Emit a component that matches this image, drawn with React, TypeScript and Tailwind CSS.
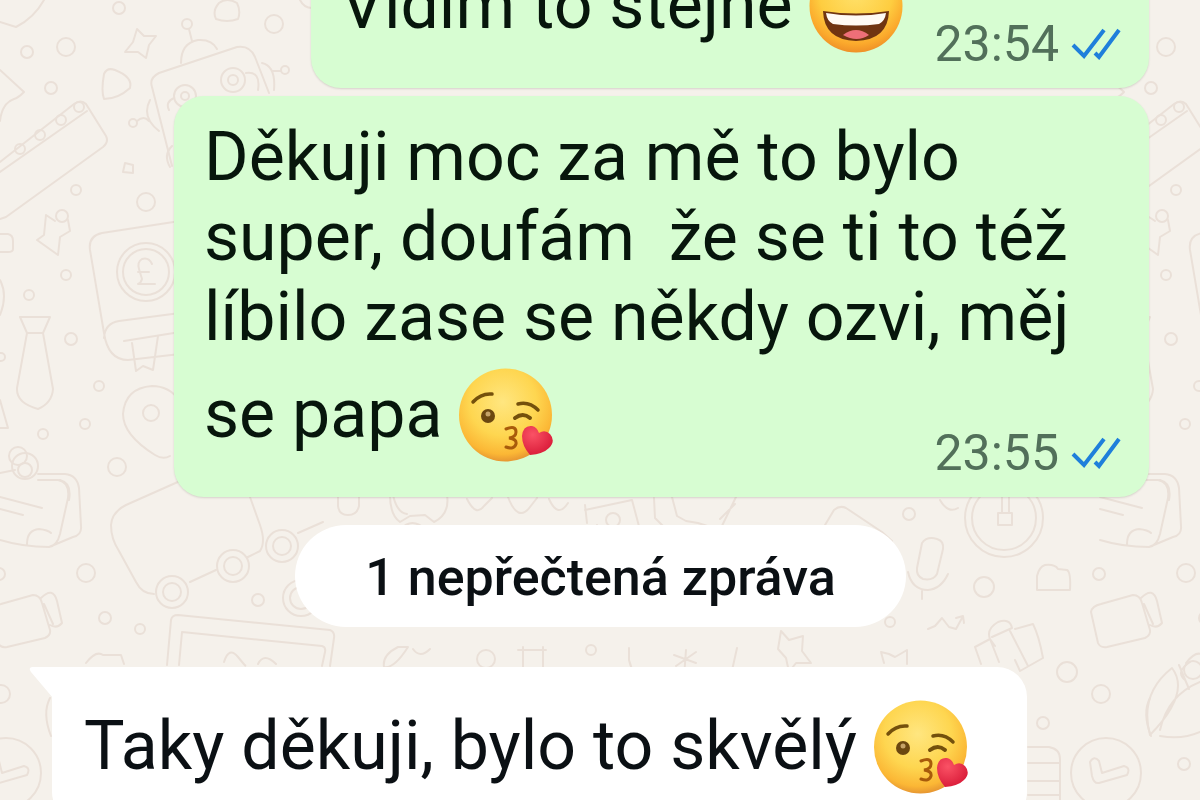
import type { ReactNode } from "react";

/* One vertical strip of the wallpaper; it repeats every 1100 units. */
function DoodleStrip() {
  return (
    <g>
      <path d="M0 22l16 5q18-9 28-27M0 70l24 22q-6 6-10 7q-12 4-14 22" />
      <circle cx="119" cy="8" r="6" />
      <circle cx="27" cy="52" r="6" />
      <circle cx="66" cy="47" r="9" />
      <circle cx="51" cy="88" r="6" />
      <path d="M137 29l7 7 12 0-7 9-3 13-8-6-13 0 8-10z" />
      <path d="M104 74q3-7 11-4q18 7 15 18q-12 11-26 11q-3-8 0-25z" />
      <circle cx="187" cy="24" r="5" />
      <path d="M189 29l3 12M181 63q0-20 17-23q14-1 19 9" />
      <path d="M219 3q8-6 18 0q4 8 1 16q-11 4-22 0q-4-8 3-16z" />
      <circle cx="274" cy="24" r="9" />
      <path d="M300 0q4 8 12 8" />
      <path d="M172 166l-20-79q-3-9 7-14l78-26q13-2 18 10l14 36" />
      <circle cx="185" cy="96" r="11" />
      <circle cx="185" cy="96" r="4" />
      <circle cx="233" cy="80" r="12" />
      <circle cx="233" cy="80" r="5" />
      <path d="M174 98q-9 4-5 12M246 73q15-2 12 17M262 63q14 3 12 27M273 71l8 0M150 100q-9 17 9 31" />
      <circle cx="285" cy="70" r="4" />
      <circle cx="133" cy="123" r="4" />
      <path d="M137 121q7-6 12 0M172 146q-9 9-2 21" />
      <path d="M0 162l74-58q7-5 12 0l20 32q3 6-3 11L6 217l-6 2M0 172l87-61" />
      <circle cx="79" cy="107" r="5" />
      <circle cx="61" cy="120" r="5" />
      <circle cx="40" cy="135" r="5" />
      <circle cx="20" cy="149" r="5" />
      <path d="M125 163l8 2 0 8-10-1z" />
      <circle cx="76" cy="190" r="5" />
      <circle cx="146" cy="202" r="9" />
      <circle cx="62" cy="216" r="6" />
      <path d="M46 215l9 6M68 220l2 11-10 6-2 18-21-15 7-5 2-20" />
      <path d="M0 234l8 0q5 1 5 7v8q0 3-5 3H0" />
      <path d="M180 221l-78 12q-14 3-12 17l14 83q4 27 24 27l52-6M104 338q1-15 15-17l61-8M124 341l56-9M132 343l4 28 7-5 10 4 5-34" />
      <circle cx="146" cy="272" r="29" />
      <circle cx="146" cy="272" r="23" />
      <path d="M152 264q-3-7-10-5q-5 3-3 10l3 10q-1 4-4 5h17M138 272h11" />
      <circle cx="66" cy="275" r="5" />
      <circle cx="29" cy="295" r="5" />
      <circle cx="71" cy="339" r="6" />
      <circle cx="99" cy="386" r="5" />
      <circle cx="85" cy="424" r="5" />
      <circle cx="43" cy="434" r="5" />
      <circle cx="1" cy="357" r="4" />
      <circle cx="117" cy="467" r="9" />
      <path d="M20 317h30l-7 16 10 56q-1 14-15 20q-22-6-21-21l10-55zM27 333h16M0 280q8 15 0 35M0 400l8 28H0" />
      <path d="M170 456q-7 4-15-1q-32-20-32-41q2-26 29-28q17 0 27 14" />
      <circle cx="151" cy="413" r="8" />
      <circle cx="18" cy="456" r="9" />
      <circle cx="25" cy="466" r="13" />
      <circle cx="25" cy="470" r="7" />
      <path d="M0 473l15-3M38 474h27q12 1 14 14l2 38q1 9-8 11l-24 10q-26 0-49-7M38 480h20q12 2 10 18l-8 36q-3 12-11 13M60 480q12 3 9 20M0 497l42 11M0 509l23 6M27 544q0-14 12-15q9 1 12 4" />
      <path d="M180 481l-54 24q-14 7-15 20q0 14 8 26l17 31q6 12 18 12M190 582l26-12M248 557l12-6q6-9 0-26l-10-28M298 533l25-11" />
      <circle cx="172" cy="592" r="16" />
      <circle cx="172" cy="592" r="9" />
      <circle cx="233" cy="566" r="16" />
      <circle cx="233" cy="566" r="9" />
      <circle cx="282" cy="546" r="16" />
      <circle cx="282" cy="546" r="9" />
      <circle cx="301" cy="598" r="18" />
      <circle cx="301" cy="598" r="11" />
      <circle cx="258" cy="600" r="6" />
      <circle cx="86" cy="573" r="9" />
      <circle cx="105" cy="618" r="6" />
      <circle cx="140" cy="629" r="5" />
      <circle cx="-1" cy="574" r="6" />
      <path d="M-9 612q1-6 10-8l32-9q7 0 9 8l8 27q1 5-5 8L7 647q-7 1-9-4zM41 598q12-12 16 3l5 22q-5 6-12 2M44 604l9 20" />
      <path d="M167 665l4-45q1-5 7-5l152 15q5 2 4 8l-4 28M179 665l3-33 140 14q4 1 3 6l-3 14M224 662q5-16 14-5t7 8M258 664q6-12 18 0M86 663q10-13 17-8l18 0 3 9" />
      <circle cx="1" cy="694" r="9" />
      <path d="M50 698q-8 15 1 38" />
      <circle cx="6" cy="773" r="35" />
      <path d="M-10 762q4-7 9-1l3 12 22-7q7 2 3 9l-28 8q-5 1-7-7z" />
    </g>
  );
}

function Wallpaper() {
  return (
    <svg
      aria-hidden="true"
      className="absolute inset-0 h-full w-full"
      viewBox="0 0 1200 800"
      preserveAspectRatio="xMidYMid slice"
      fill="none"
      stroke="#eae0d8"
      strokeWidth="2"
      strokeLinejoin="round"
      strokeLinecap="round"
    >
      <DoodleStrip />
      <g transform="translate(1100 0)">
        <DoodleStrip />
      </g>
      <path d="M338 495v11q1 9 10 9t11-9v-11M390 495q0 20 10 27l10-6 15-1 9 7q16-8 13-27M393 495q4 18 14 19M400 530q12-14 26 0M467 499q9 18 17 7l8-8M508 497q10 26 22 10l7-9M549 499q9 20 19 4M585 505l2 18M585 510l47-10 8 30M600 530l-3-5" />
      <circle cx="613" cy="520" r="7" />
      <path d="M654 498l1 20 12 12M672 497l5 19 9 5 12 2 22 7 16-33M720 519l15-15M822 530l12-20q6-5 12-2l36 24 10 9" />
      <path d="M384 667q-2-12 14-20l10 0q-14 22-24 20zM413 649q7 10 17 0M523 647v26h20v-26M518 650h28M629 648v12q4 18 20 28M737 648l-8 36M686 650l-2 27M674 655l22 8M696 652l-20 14" />
      <circle cx="486" cy="659" r="9" />
      <circle cx="591" cy="650" r="5" />
      <path d="M781 631l8 9 14-4-1 15 9 12-15 0-7 9-3-14-8-9z" />
      <circle cx="890" cy="622" r="5" />
      <circle cx="909" cy="514" r="6" />
      <circle cx="984" cy="587" r="10" />
      <circle cx="1067" cy="672" r="10" />
      <circle cx="1043" cy="723" r="6" />
      <circle cx="1184" cy="764" r="6" />
      <circle cx="1004" cy="518" r="39" />
      <circle cx="1004" cy="518" r="32" />
      <path d="M1002 497v16M1009 497v16M998 513h14v12h-14zM940 500q8 14 18 8" />
      <path d="M922 543q5-7 15-4q7 2 6 10l-6 25q-4 7-14 5q-7-3-6-11zM908 572q4 18 20 18q13-1 20-16M922 591v8" />
      <path d="M1037 590v-14q2-9 8-11q10-1 13 4l9 1q4 2 3 20z" />
      <path d="M928 629l7-3 7-8 7 9 7 2 6-11M956 618l7-2 1 7M881 652l8 2 6 3 7-4 5-3 0 14M884 663l-3-11" />
      <path d="M981 664l-6-17 15-8 5 7M999 662l-9-23q-4-10 8-17q12-4 14 6l-20 9M1015 629l18-5q6 12 10 34l-23 13-5-11M1010 631l18 35" />
      <path d="M1150 735q-11-41 22-67q19 25-22 67M1160 730q8-35 40-48M1160 736q22 4 40-4M1185 680q-10-8 5-18M1179 665l10 24" />
      <circle cx="1193" cy="670" r="9" />
      <path d="M1028 747h21q11 2 11 12v41M1028 763h31M1028 781h31M1028 795h31" />
    </svg>
  );
}

function KissEmoji() {
  return (
    <svg
      role="img"
      aria-label="Face blowing a kiss"
      viewBox="0 0 94 94"
      className="-mb-[25px] mt-[11px] inline-block size-[94px] align-baseline"
    >
      <defs>
        <radialGradient id="kissSkin" cx="47%" cy="36%" r="66%">
          <stop offset="0" stopColor="#ffe680" />
          <stop offset="0.55" stopColor="#fed650" />
          <stop offset="0.85" stopColor="#fbb735" />
          <stop offset="1" stopColor="#e28f31" />
        </radialGradient>
        <radialGradient id="kissHeart" cx="35%" cy="30%" r="75%">
          <stop offset="0" stopColor="#fa5265" />
          <stop offset="1" stopColor="#d91a38" />
        </radialGradient>
      </defs>
      <circle cx="46.500" cy="47" r="46.500" fill="url(#kissSkin)" />
      <g fill="none" stroke="#74500c" strokeLinecap="round">
        <path d="M14 34q8-9 19-8" strokeWidth="3.500" />
        <path d="M59 36q11-3 20 6" strokeWidth="3.500" />
        <path d="M56 50q8-6 15 0" strokeWidth="4" />
        <path d="M47 61q10-4 10 3q0 5-7 6q8 1 7 6q-2 6-10 3" strokeWidth="3" stroke="#a85b0b" />
      </g>
      <circle cx="29" cy="48" r="7" fill="#6b4710" />
      <circle cx="29" cy="46" r="2.500" fill="#c5a368" />
      <path
        d="M71 87Q63 78 63 68Q64 57 73 58Q78 59 80 65Q86 61 91 66Q97 73 90 80Q84 86 71 87Z"
        fill="url(#kissHeart)"
      />
    </svg>
  );
}

function GrinEmoji() {
  return (
    <svg
      role="img"
      aria-label="Grinning face with smiling eyes"
      viewBox="0 0 94 94"
      className="-mb-[25px] mt-[11px] inline-block size-[94px] align-baseline"
    >
      <defs>
        <radialGradient id="grinSkin" cx="50%" cy="35%" r="66%">
          <stop offset="0" stopColor="#ffe26c" />
          <stop offset="0.6" stopColor="#fecd40" />
          <stop offset="0.85" stopColor="#fba92c" />
          <stop offset="1" stopColor="#ee8e27" />
        </radialGradient>
      </defs>
      <circle cx="47" cy="47" r="46.500" fill="url(#grinSkin)" />
      <g fill="none" stroke="#74500c" strokeWidth="4" strokeLinecap="round">
        <path d="M20 36q9-13 18 0M56 36q9-13 18 0" />
      </g>
      <path d="M14 52Q47 57 80 52Q79 81 47 82Q15 81 14 52Z" fill="#703411" />
      <path d="M17 54Q47 59 77 54Q76 62 70 65Q47 68 24 65Q18 62 17 54Z" fill="#fffaf4" />
      <path d="M34 76Q47 66 60 76Q48 84 34 76Z" fill="#ee6f78" />
    </svg>
  );
}

function ReadTicks() {
  return (
    <svg
      role="img"
      aria-label="Read"
      viewBox="0 0 50 32"
      className="h-8 w-[50px]"
      fill="none"
      stroke="#1f7fdb"
      strokeWidth="4"
    >
      <path d="M2 17l11 11L33 2M24 25l4 4L48 2" />
    </svg>
  );
}

function SentMessage({ time, children }: { time: string; children: ReactNode }) {
  return (
    <article className="w-fit max-w-[975px] self-end rounded-[30px] bg-[#d7fdd2] pb-[14px] pl-[30px] pr-7 pt-[21px] shadow-[0_1px_2px_rgba(80,70,60,0.18)]">
      <p className="whitespace-pre-wrap text-[68px] leading-[80px] text-[#07160c]">
        {children}
        <span className="float-right ml-[31px] mt-[66px] flex items-center gap-3 text-[50px] leading-[60px] text-[#52705a]">
          <time>{time}</time>
          <ReadTicks />
        </span>
      </p>
    </article>
  );
}

export default function App() {
  return (
    <main
      lang="cs"
      className="relative h-screen overflow-hidden bg-[#f5f1eb] font-['Roboto','Noto_Sans',sans-serif]"
    >
      <Wallpaper />
      <section className="relative -mt-[73px] flex flex-col pl-[52px] pr-[51px]">
        <SentMessage time="23:54">
          Vidím to stejně <GrinEmoji />
        </SentMessage>
        <div className="mt-2 flex flex-col">
          <SentMessage time="23:55">
            {"Děkuji moc za mě to bylo super, doufám  že se ti to též líbilo zase se někdy ozvi, měj se papa "}
            <KissEmoji />
          </SentMessage>
        </div>
        <h2 className="mt-7 self-center rounded-full bg-white px-[70px] pb-5 pt-6 text-[52px] font-medium leading-[58px] text-[#0b1014]">
          1 nepřečtená zpráva
        </h2>
        <article className="relative mt-10 w-[975px] max-w-full rounded-[30px] rounded-tl-none bg-white px-8 pb-9 pt-[22px]">
          <svg
            aria-hidden="true"
            viewBox="0 0 24 32"
            className="absolute -left-[23px] top-0 h-8 w-6"
            fill="#ffffff"
          >
            <path d="M24 0H3Q-1 1 2 5L24 31Z" />
          </svg>
          <p className="text-[68px] leading-[80px] text-[#0b1014]">
            Taky děkuji, bylo to skvělý <KissEmoji />
          </p>
        </article>
      </section>
    </main>
  );
}
